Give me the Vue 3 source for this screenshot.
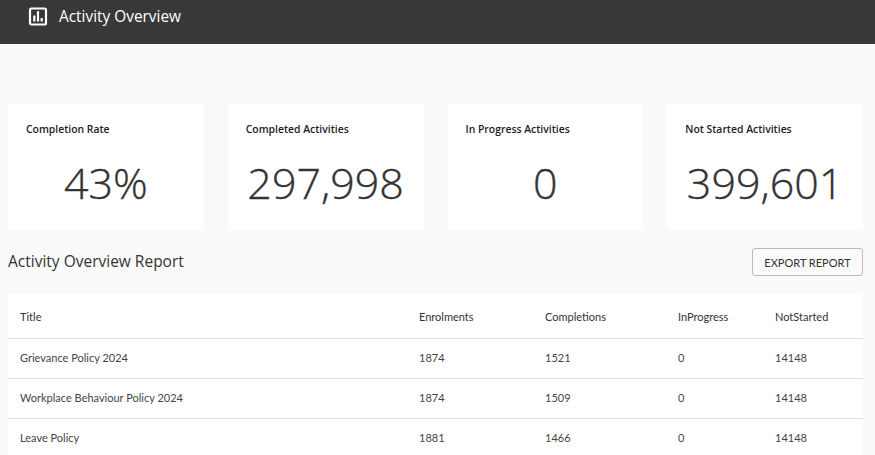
<script setup>
const cards = [
  { label: 'Completion Rate', value: '43%' },
  { label: 'Completed Activities', value: '297,998' },
  { label: 'In Progress Activities', value: '0' },
  { label: 'Not Started Activities', value: '399,601' },
]

const rows = [
  { title: 'Grievance Policy 2024', enrolments: 1874, completions: 1521, inProgress: 0, notStarted: 14148 },
  { title: 'Workplace Behaviour Policy 2024', enrolments: 1874, completions: 1509, inProgress: 0, notStarted: 14148 },
  { title: 'Leave Policy', enrolments: 1881, completions: 1466, inProgress: 0, notStarted: 14148 },
]
</script>

<template>
  <div class="page">
    <header class="topbar">
      <svg class="topbar-icon" width="20" height="20" viewBox="0 0 20 20" aria-hidden="true">
        <rect x="2" y="2.5" width="16" height="16" rx="1.5" fill="none" stroke="currentColor" stroke-width="2.2" />
        <path d="M5.2 9.5h2.2v6H5.2zM8.9 5.3h2.2v10.2H8.9zM12.6 12h2.2v3.5h-2.2z" fill="currentColor" />
      </svg>
      <span class="topbar-title">Activity Overview</span>
    </header>

    <main class="content">
      <section class="cards">
        <div v-for="card in cards" :key="card.label" class="card">
          <div class="card-label">{{ card.label }}</div>
          <div class="card-value">{{ card.value }}</div>
        </div>
      </section>

      <div class="report-head">
        <h2>Activity Overview Report</h2>
        <button class="export" type="button">EXPORT REPORT</button>
      </div>

      <table class="report">
        <colgroup>
          <col class="col-title" />
          <col class="col-enrol" />
          <col class="col-comp" />
          <col class="col-prog" />
          <col />
        </colgroup>
        <thead>
          <tr>
            <th>Title</th>
            <th>Enrolments</th>
            <th>Completions</th>
            <th>InProgress</th>
            <th>NotStarted</th>
          </tr>
        </thead>
        <tbody>
          <tr v-for="row in rows" :key="row.title">
            <td>{{ row.title }}</td>
            <td>{{ row.enrolments }}</td>
            <td>{{ row.completions }}</td>
            <td>{{ row.inProgress }}</td>
            <td>{{ row.notStarted }}</td>
          </tr>
        </tbody>
      </table>
    </main>
  </div>
</template>

<style>
html, body {
  margin: 0;
  height: 100%;
  overflow: hidden;
  background: #fafafa;
}
</style>

<style scoped>
.page {
  font-family: "Open Sans", "Liberation Sans", sans-serif;
  color: #333;
}

.topbar {
  display: flex;
  align-items: flex-start;
  gap: 11px;
  height: 44px;
  box-sizing: border-box;
  padding: 6px 0 0 28px;
  background: #383838;
  color: #fff;
}

.topbar-title {
  margin-top: 1px;
  font-size: 15.4px;
  line-height: 20px;
}

.content {
  padding: 60px 12px 0 8px;
}

.cards {
  display: grid;
  grid-template-columns: repeat(4, minmax(0, 1fr));
  gap: 24px;
}

.card {
  height: 126px;
  box-sizing: border-box;
  padding: 17px 18px;
  background: #fff;
}

.card-label {
  font-size: 10.4px;
  font-weight: 600;
  line-height: 16px;
  color: #222;
}

.card-value {
  margin-top: 16px;
  font-size: 43px;
  font-weight: 300;
  line-height: 60px;
  text-align: center;
  color: #333;
  -webkit-text-stroke: 0.35px #333;
}

.report-head {
  display: flex;
  align-items: center;
  justify-content: space-between;
  margin-top: 18px;
}

.report-head h2 {
  margin: 0 0 2px;
  font-size: 15.5px;
  font-weight: 400;
  color: #333;
}

.export {
  width: 111px;
  height: 28px;
  padding: 0;
  font-family: "Lato", sans-serif;
  font-size: 11px;
  color: #333;
  background: #fafafa;
  border: 1px solid #bbb;
  border-radius: 3px;
}

.report {
  width: 100%;
  margin-top: 18px;
  border-collapse: collapse;
  table-layout: fixed;
  background: #fff;
  font-family: "Lato", sans-serif;
  font-size: 11px;
  color: #444;
}

.col-title { width: 399px; }
.col-enrol { width: 126px; }
.col-comp { width: 133px; }
.col-prog { width: 97px; }

.report th,
.report td {
  padding: 0 0 0 12px;
  text-align: left;
  font-weight: 400;
  border-bottom: 1px solid #ddd;
}

.report th {
  height: 44px;
  color: #333;
}

.report td {
  height: 40px;
  padding-bottom: 2px;
  box-sizing: border-box;
}
</style>
